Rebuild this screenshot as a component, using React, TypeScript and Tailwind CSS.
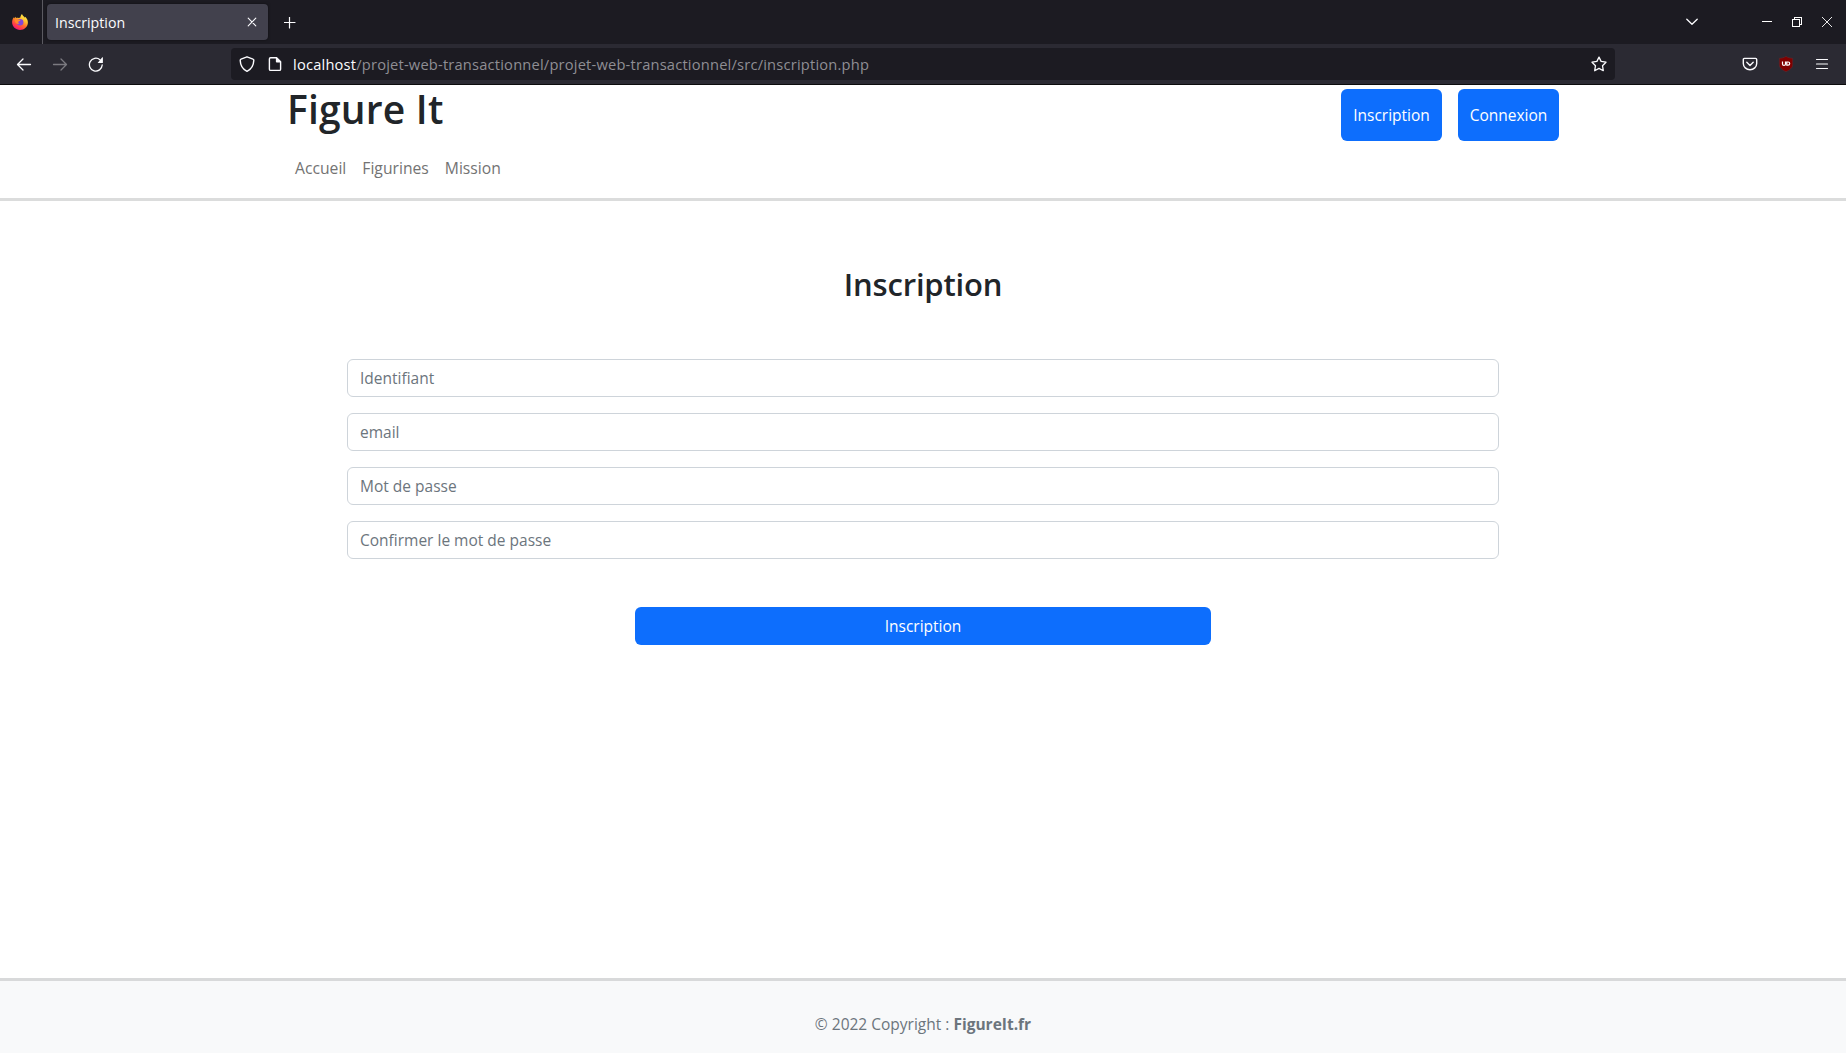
import React from "react";

const stroke = { fill: "none", stroke: "currentColor", strokeLinecap: "round", strokeLinejoin: "round" } as const;

function FirefoxLogo() {
  return (
    <svg className="size-4 shrink-0" viewBox="0 0 16 16">
      <defs>
        <linearGradient id="flame" x1="0.85" y1="0.05" x2="0.3" y2="1">
          <stop offset="0" stopColor="#fff44f" />
          <stop offset="0.35" stopColor="#ffbd2f" />
          <stop offset="0.6" stopColor="#ff6a2b" />
          <stop offset="0.85" stopColor="#ff2f55" />
          <stop offset="1" stopColor="#e31587" />
        </linearGradient>
      </defs>
      <path fill="url(#flame)" d="M10 0c.3 1.300 1.200 2 2.200 2.800.3.300.5.600.7.900l.3-.9C14.800 4.300 15.900 6.300 15.900 8.400c0 4.200-3.500 7.500-7.900 7.500S.1 12.600.1 8.300C.1 6.500.8 4.600 1.700 3.300l.3 1.200C2.500 3.800 3.200 3.100 3.400 2.700c.1.600.3 1 .7 1.300.8-.3 1.700-.3 2.300 0C7 3.700 7.500 3.600 8.200 3.700 8.500 2.200 9 1 10 0Z" />
      <circle cx="8.100" cy="8.300" r="3.300" fill="#8247d8" />
      <path fill="#ff8a2a" d="M2.500 5c1.500-.8 3-.4 4 .6l2 .3c-.2 1-1.200 1.200-2 1.500-.4.900-.2 2 .9 2.500-2 .6-3.900-.3-4.500-2.300Z" />
    </svg>
  );
}

function TabStrip() {
  return (
    <div className="flex h-11 items-center bg-[#1c1b22] text-[#fbfbfe]">
      <div className="flex h-full w-[43px] items-center border-r border-[#5b5a61] pl-3">
        <FirefoxLogo />
      </div>
      <div className="ml-1 flex h-9 w-[221px] items-center justify-between rounded bg-[#42414d] pr-[11px] pl-2 shadow-[0_0_3px_rgba(0,0,0,0.5)]">
        <span className="pt-0.5 text-[14.2px] leading-5">Inscription</span>
        <svg className="size-[10px]" viewBox="0 0 10 10" {...stroke} strokeWidth="1.1"><path d="M1.200 1.200l7.600 7.600M8.800 1.200L1.200 8.800" /></svg>
      </div>
      <svg className="mt-[2px] ml-4 size-3" viewBox="0 0 12 12" {...stroke} strokeWidth="1.2"><path d="M5.500 0v11M0 5.500h11" /></svg>
      <div className="ml-auto flex items-center pr-[14px]">
        <svg className="mr-[64px] h-2 w-3" viewBox="0 0 12 8" {...stroke} strokeWidth="1.3"><path d="M.8 1.200L6 6.300l5.200-5.100" /></svg>
        <svg className="mr-5 h-[10px] w-[10px]" viewBox="0 0 10 10" shapeRendering="crispEdges"><path fill="#fff" d="M0 4h10v1H0z" /></svg>
        <svg className="mr-5 h-[10px] w-[10px]" viewBox="0 0 10 10" fill="none" stroke="#fff" shapeRendering="crispEdges"><path d="M.5 2.500h7v7h-7zM2.500 2.500v-2h7v7h-2" /></svg>
        <svg className="h-[10px] w-[10px]" viewBox="0 0 10 10" fill="none" stroke="#fff" strokeWidth=".9"><path d="M0 0l10 10M10 0L0 10" /></svg>
      </div>
    </div>
  );
}

function Toolbar() {
  return (
    <div className="flex h-[41px] items-center border-b border-[#0c0c0d] bg-[#2b2a33] text-[#fbfbfe]">
      <svg className="ml-4 size-4" viewBox="0 0 16 16" {...stroke} strokeWidth="1.3"><path d="M14.500 8.500H1.800M7 3L1.500 8.500 7 14" /></svg>
      <svg className="ml-5 size-4 text-[#7b7a80]" viewBox="0 0 16 16" {...stroke} strokeWidth="1.3"><path d="M1.500 8.500h12.700M9 3l5.500 5.500L9 14" /></svg>
      <svg className="ml-5 size-4" viewBox="0 0 16 16" {...stroke} strokeWidth="1.300"><path d="M14.200 9A6.400 6.400 0 1 1 12 3.800" /><path fill="currentColor" stroke="none" d="M14.900 1.600v4.800a.5.500 0 0 1-.5.500H9.600L14.300 1.300c.3-.2.600 0 .6.300Z" /></svg>
      <div className="ml-[127px] flex h-8 w-[1384px] items-center rounded bg-[#1c1b22] pl-2">
        <svg className="size-4" viewBox="0 0 16 16" {...stroke} strokeWidth="1.400"><path d="M8 .8l6 2.300c.6.200.9.700.8 1.300C14.600 9.500 12 13.400 8 15.300 4 13.400 1.400 9.500 1.200 4.400c0-.6.300-1.100.8-1.300Z" /></svg>
        <svg className="ml-3 size-4" viewBox="0 0 16 16" {...stroke} strokeWidth="1.400"><path d="M3.600 1.700h6l4 4v7.500c0 .8-.4 1.200-1.200 1.200H3.600c-.8 0-1.200-.4-1.200-1.200V2.900c0-.8.400-1.200 1.200-1.200Z" /><path fill="currentColor" stroke="none" d="M8.900 1v4.700c0 .5.300.8.800.8h4.500Z" /></svg>
        <span className="ml-[10px] text-[14.670px] leading-5 tracking-[0.200px] whitespace-nowrap text-[#8f8e94]">
          <span className="text-[#fbfbfe]">localhost</span>/projet-web-transactionnel/projet-web-transactionnel/src/inscription.php
        </span>
        <svg className="mr-2 ml-auto size-4" viewBox="0 0 16 16" {...stroke} strokeWidth="1.300"><path d="M8 1.100l2.100 4.300 4.900.8-3.500 3.500.8 5L8 12.400l-4.300 2.300.8-5L1 6.200l4.900-.8Z" /></svg>
      </div>
      <svg className="ml-[127px] size-4" viewBox="0 0 16 16" {...stroke} strokeWidth="1.400"><path d="M2.400 2.400h11.200c.7 0 1.100.5 1.100 1.100v4a6.700 6.200 0 0 1-13.400 0v-4c0-.6.400-1.100 1.100-1.100Z" /><path d="M4.800 6.300L8 9.400l3.200-3.100" /></svg>
      <svg className="ml-5 size-4" viewBox="0 0 16 16">
        <path fill="#800000" stroke="#5d3037" strokeWidth=".5" d="M8 .3c2 1.400 4.300 1.900 6.700 2v6.500c0 3.300-3.500 5.300-6.700 7-3.200-1.700-6.700-3.700-6.700-7V2.300c2.400-.1 4.700-.6 6.700-2Z" />
        <path fill="none" stroke="#fff" strokeWidth="1.200" d="M4.500 5.500v2.400a1.500 1.500 0 0 0 3 0V5.500M8.800 6h1.300a1.600 1.600 0 0 1 0 3.200H8.800Z" />
      </svg>
      <svg className="ml-5 size-4" viewBox="0 0 16 16" {...stroke} strokeWidth="1.200"><path d="M2.500 3.500h11M2.500 8h11M2.500 12.500h11" /></svg>
    </div>
  );
}

function SiteHeader() {
  const button = "flex h-[52px] w-[101px] items-center justify-center rounded-md bg-[#0d6efd] pt-0.5 text-white";
  return (
    <header className="h-[116px] border-b-[3px] border-[#dbdcdc]">
      <div className="mx-auto flex w-[1272px] items-start justify-between">
        <div>
          <h1 className="text-[39px] leading-12 font-semibold tracking-[0.200px]">Figure It</h1>
          <nav className="mt-[23px] ml-2 flex gap-4 text-[15.700px] leading-6 text-[#737373]">
            <a>Accueil</a>
            <a>Figurines</a>
            <a>Mission</a>
          </nav>
        </div>
        <div className="mt-1 flex gap-4">
          <button className={button}>Inscription</button>
          <button className={button}>Connexion</button>
        </div>
      </div>
    </header>
  );
}

const fields = ["Identifiant", "email", "Mot de passe", "Confirmer le mot de passe"];

export default function App() {
  return (
    <div className="flex h-[1053px] flex-col overflow-hidden bg-white font-['Open_Sans',sans-serif] text-[15.500px] text-[#212529]">
      <TabStrip />
      <Toolbar />
      <SiteHeader />
      <main className="flex grow flex-col items-center">
        <h2 className="mt-[63px] text-[31px] leading-10 font-semibold tracking-[-0.200px]">Inscription</h2>
        <form className="mt-[55px] flex w-[1152px] flex-col items-center gap-4">
          {fields.map((label) => (
            <input
              key={label}
              placeholder={label}
              className="h-[38px] w-full rounded-md border border-[#ced4da] px-3 placeholder:text-[#6c757d]"
            />
          ))}
          <button type="button" className="mt-8 h-[38px] w-[576px] rounded-md bg-[#0d6efd] pt-px text-white">Inscription</button>
        </form>
      </main>
      <footer className="h-[75px] border-t-[3px] border-[#d8d9da] bg-[#f8f9fa] pt-[31px] text-center leading-6 text-[#6c757d]">
        © 2022 Copyright : <a className="font-bold">FigureIt.fr</a>
      </footer>
    </div>
  );
}
